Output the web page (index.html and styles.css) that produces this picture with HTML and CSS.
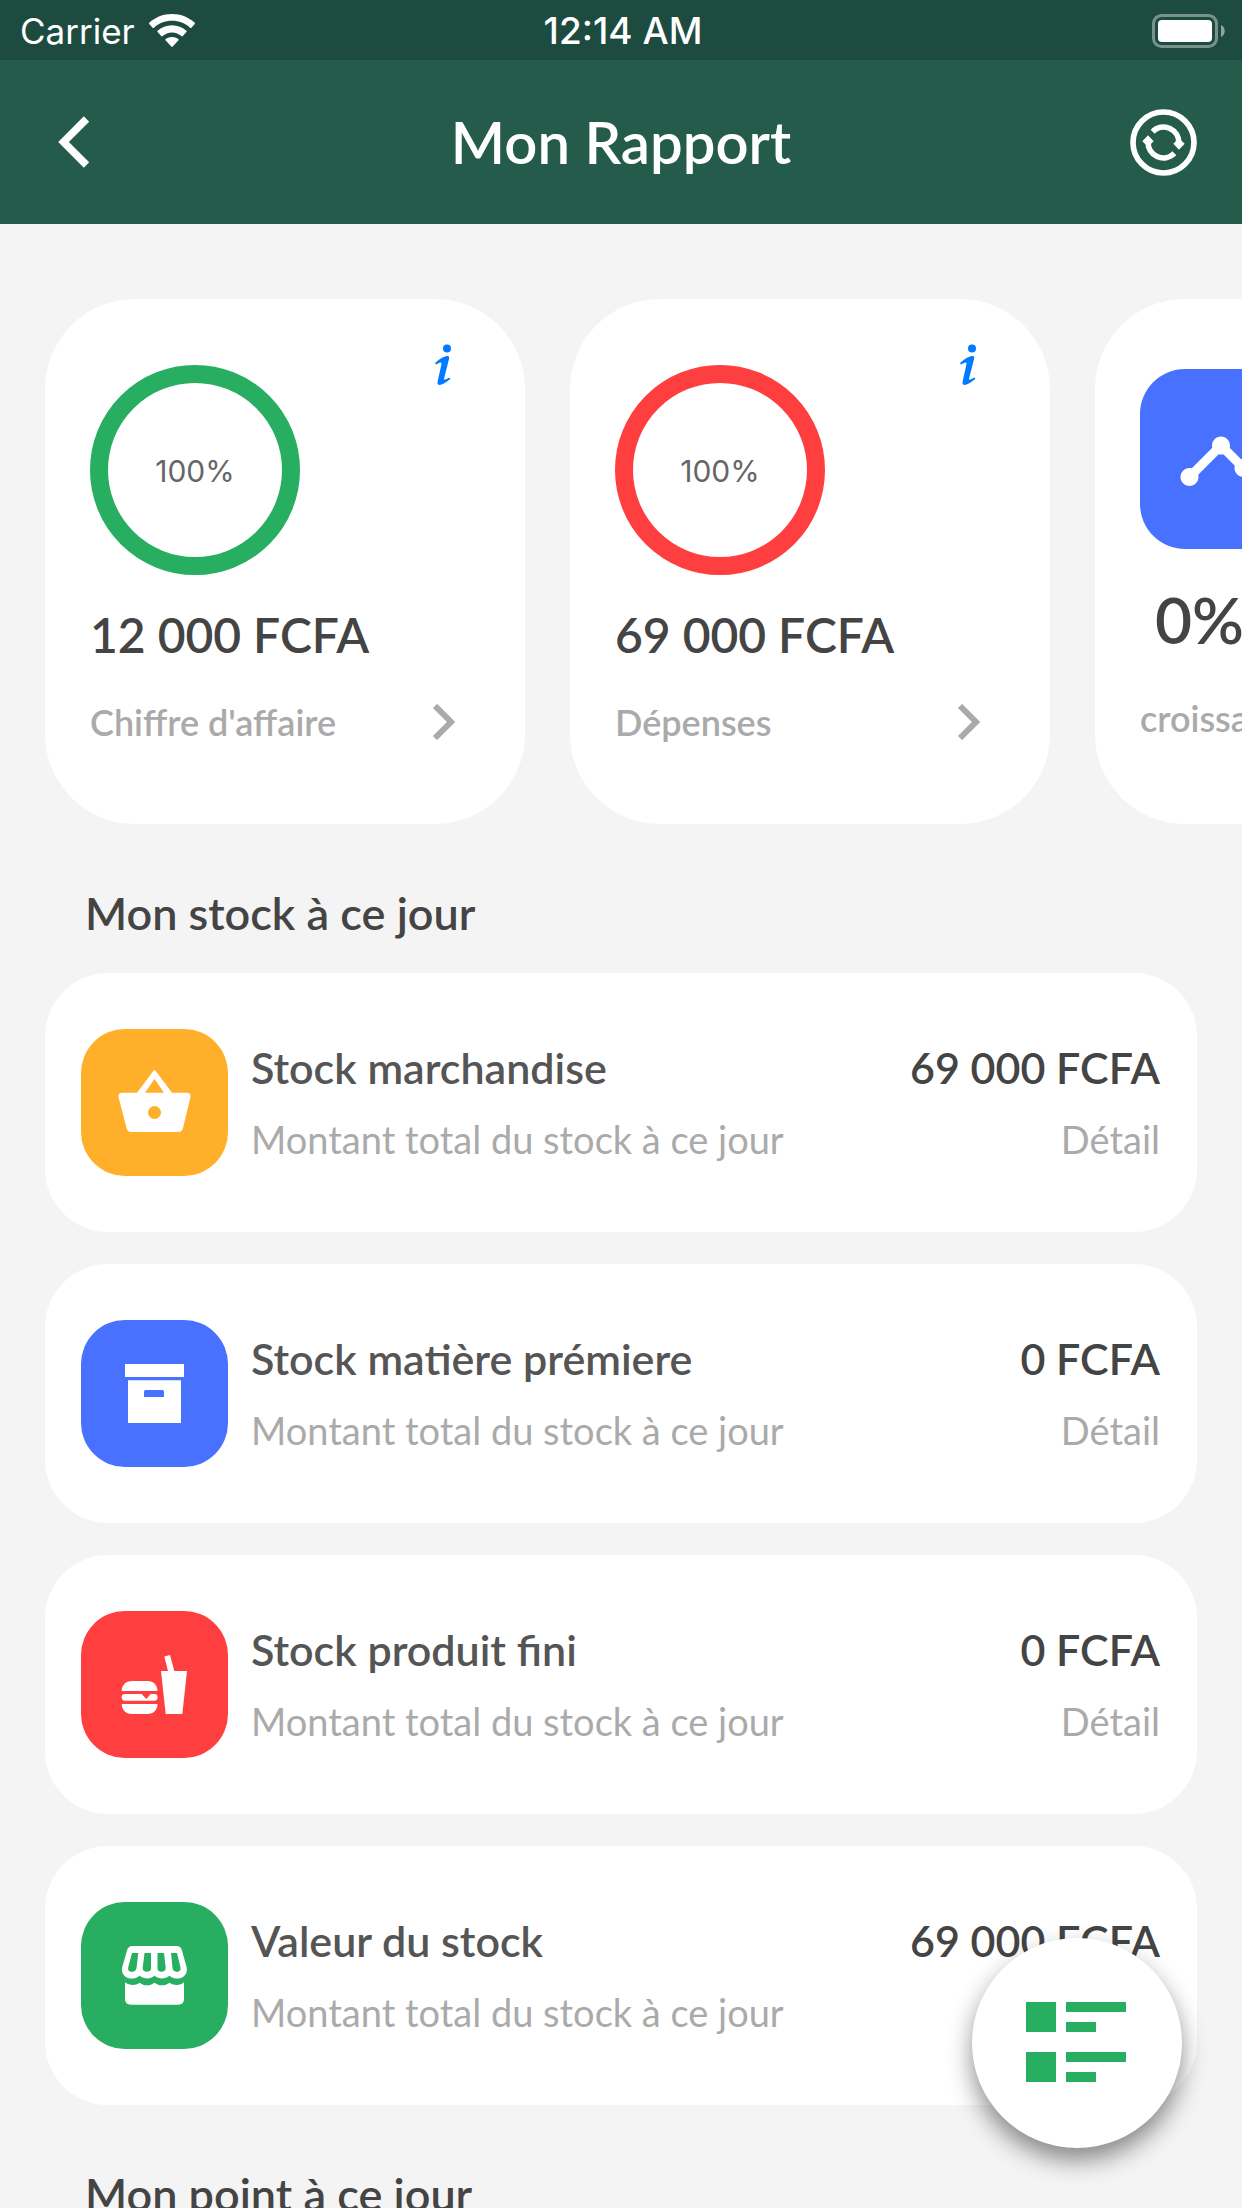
FILE: index.html
```
<!DOCTYPE html>
<html lang="fr">
<head>
<meta charset="utf-8">
<meta name="viewport" content="width=device-width, initial-scale=1">
<title>Mon Rapport</title>
<link rel="stylesheet" href="styles.css">
</head>
<body>
<div class="app">
  <div class="status">
    <div class="status-left">
      <span>Carrier</span>
      <svg class="wifi" viewBox="0 0 46 34" aria-hidden="true">
        <path fill="#fff" d="M23 0C14 0 6 3.400 .3 8.800q-.6.600 0 1.300L3.600 13.700q.7.700 1.400 0C9.700 9.400 16 6.800 23 6.800s13.300 2.600 18 6.900q.7.700 1.400 0l3.300-3.600q.6-.7 0-1.300C40 3.400 32 0 23 0z"/>
        <path fill="#fff" d="M23 11.200c-5.600 0-10.700 2.100-14.400 5.500q-.7.700 0 1.400l3.600 4q.6.600 1.300 0c2.500-2.300 5.800-3.700 9.500-3.700s7 1.400 9.500 3.700q.7.600 1.300 0l3.600-4q.7-.7 0-1.400c-3.700-3.400-8.800-5.500-14.400-5.500z"/>
        <path fill="#fff" d="M23 23c-2.400 0-4.600.8-6.300 2.100q-.8.700 0 1.400l5.600 6q.7.800 1.400 0l5.600-6q.8-.7 0-1.400C27.600 23.800 25.400 23 23 23z"/>
      </svg>
    </div>
    <span class="time">12:14 AM</span>
    <svg class="battery" viewBox="0 0 74 34" aria-hidden="true">
      <rect x="1.500" y="1.500" width="63" height="31" rx="8" fill="none" stroke="#fff" stroke-opacity=".4" stroke-width="3"/>
      <rect x="6" y="6" width="54" height="22" rx="4" fill="#fff"/>
      <path d="M69 11c5 2 5 10 0 12z" fill="#fff" fill-opacity=".5"/>
    </svg>
  </div>

  <header class="topbar">
    <button class="icon-btn" type="button" aria-label="Retour">
      <svg width="58" height="52" viewBox="0 0 58 52"><path d="M41.500 3L18.500 26l23 23" fill="none" stroke="#fff" stroke-width="7.500"/></svg>
    </button>
    <h1>Mon Rapport</h1>
    <button class="icon-btn" type="button" aria-label="Actualiser">
      <svg width="67" height="67" viewBox="0 0 201 201">
        <g fill="none" stroke="#fff" stroke-width="17">
          <circle cx="100.500" cy="100.500" r="91.500"/>
          <path d="M68 68A46 46 0 0 1 146.500 104"/>
          <path d="M133 133A46 46 0 0 1 54.500 97"/>
        </g>
        <path fill="#fff" d="M130 104l17-16 17 16-17 18zM37 97l17-18 17 18-17 16z"/>
      </svg>
    </button>
  </header>

  <main class="content">
    <section class="summary" aria-label="Résumé">
      <article class="card">
        <div class="card-top">
          <div class="ring ring-green">100%</div>
          <button class="info" type="button" aria-label="Informations"><svg width="18" height="42" viewBox="0 0 18 42"><circle cx="13" cy="4.500" r="4"/><path d="M1 19C6 14.500 10.500 12 14 12q1.600.200 1.200 2.200L10.200 34q-.5 2.500 1.300 1.500l4-2 .9 1.600C12 38.500 8.500 41 5 41q-1.700-.2-1.500-3L7.500 20q.2-2-1.500-1.500L2 20.500z"/></svg></button>
        </div>
        <p class="amount">12 000 FCFA</p>
        <a class="more" href="#chiffre"><span>Chiffre d'affaire</span><svg width="50" height="36" viewBox="0 0 50 36"><path d="M17 2l16 16-16 16" fill="none" stroke="#aaa" stroke-width="6"/></svg></a>
      </article>
      <article class="card">
        <div class="card-top">
          <div class="ring ring-red">100%</div>
          <button class="info" type="button" aria-label="Informations"><svg width="18" height="42" viewBox="0 0 18 42"><circle cx="13" cy="4.500" r="4"/><path d="M1 19C6 14.500 10.500 12 14 12q1.600.200 1.200 2.200L10.200 34q-.5 2.500 1.300 1.500l4-2 .9 1.600C12 38.500 8.500 41 5 41q-1.700-.2-1.500-3L7.500 20q.2-2-1.500-1.500L2 20.500z"/></svg></button>
        </div>
        <p class="amount">69 000 FCFA</p>
        <a class="more" href="#depenses"><span>Dépenses</span><svg width="50" height="36" viewBox="0 0 50 36"><path d="M17 2l16 16-16 16" fill="none" stroke="#aaa" stroke-width="6"/></svg></a>
      </article>
      <article class="card">
        <div class="growth-tile blue">
          <svg width="108" height="108" viewBox="0 0 24 24"><path fill="#fff" d="M23 8c0 1.100-.9 2-2 2-.18 0-.35-.02-.51-.07l-3.560 3.550c.05.16.07.34.07.52 0 1.100-.9 2-2 2s-2-.9-2-2c0-.18.02-.36.07-.52l-2.550-2.550c-.16.05-.34.07-.52.07s-.36-.02-.52-.07l-4.550 4.560c.05.16.07.33.07.51 0 1.100-.9 2-2 2s-2-.9-2-2 .9-2 2-2c.18 0 .35.02.51.07l4.560-4.550C8.020 9.360 8 9.180 8 9c0-1.100.9-2 2-2s2 .9 2 2c0 .18-.02.36-.07.52l2.550 2.550c.16-.05.34-.07.52-.07s.36.02.52.07l3.550-3.560C19.020 8.350 19 8.180 19 8c0-1.100.9-2 2-2s2 .9 2 2z"/></svg>
        </div>
        <p class="percent">0%</p>
        <p class="caption">croissance</p>
      </article>
    </section>

    <h2>Mon stock à ce jour</h2>
    <ul class="list">
      <li class="row">
        <div class="tile amber">
          <svg viewBox="0 0 147 147"><path fill="#fff" fill-rule="evenodd" d="M71.500 43q2-4 4 0L91 63.700h15.500q3.500.3 3 4.300l-7.500 31q-1 4-4.500 4H50q-3.500 0-4.500-4L37.500 68q-.6-4 3-4.300H56zM73.500 50L64 63.700h19zM73.500 77a6.500 6.500 0 1 0 0 13 6.500 6.500 0 0 0 0-13z"/></svg>
        </div>
        <div class="lines"><h3>Stock marchandise</h3><p>Montant total du stock à ce jour</p></div>
        <div class="lines end"><strong>69 000 FCFA</strong><a href="#marchandise">Détail</a></div>
      </li>
      <li class="row">
        <div class="tile blue">
          <svg viewBox="0 0 147 147"><path fill="#fff" d="M44 44h59v13H44z"/><path fill="#fff" fill-rule="evenodd" d="M47 60.300h53V103H47zM63 77h20v-5.500q0-1.500-1.500-1.500h-17q-1.500 0-1.500 1.500z"/></svg>
        </div>
        <div class="lines"><h3>Stock matière prémiere</h3><p>Montant total du stock à ce jour</p></div>
        <div class="lines end"><strong>0 FCFA</strong><a href="#matiere">Détail</a></div>
      </li>
      <li class="row">
        <div class="tile red">
          <svg viewBox="0 0 147 147"><path fill="#fff" d="M80 60h7l-3.700-14.500L89 44l4.300 16H106l-4.700 43H84.700zM40.700 80C40.700 74 45 70 51 70h15.500c6 0 10 4 10 10zM40.700 93h35.800c0 6-4 10-10 10H51c-6 0-10.300-4-10.300-10zM44 83h16.700l4.600 5 4.400-5h3.600a3.350 3.350 0 0 1 0 6.700H44A3.350 3.350 0 0 1 44 83z"/></svg>
        </div>
        <div class="lines"><h3>Stock produit fini</h3><p>Montant total du stock à ce jour</p></div>
        <div class="lines end"><strong>0 FCFA</strong><a href="#produit">Détail</a></div>
      </li>
      <li class="row">
        <div class="tile green">
          <svg viewBox="0 0 147 147"><path fill="#fff" fill-rule="evenodd" d="M51.500 44h44q4.500 0 5.500 4.500l4.700 17q1 5-2.500 8.500c-4.500 4-10.500 3-14.900-.3-4.500 3.700-10 3.700-14.800 0-4.500 3.700-10 3.700-14.800 0-4.500 3.300-10.500 4.300-15.100.3q-3.500-3.500-2.500-8.500L46 48.500Q47 44 51.500 44zM51 51h6.300l-1.800 15c-.5 5-9.500 5.500-8.300-.5zM63.500 51H70v15.500c0 4.500-8.700 4.500-8.300-.5zM76.500 51H83l1.700 15c.3 5-8.200 5-8.200.5zM90 51h6l3.500 14.500c1 6-7.500 5.500-8 .5z"/><path fill="#fff" d="M44 80.300c4.500 3.600 10.500 3.600 14.500.5 4.500 3.400 10.500 3.400 15 0 4.500 3.400 10.500 3.400 15 0 4.500 3.100 10.500 3.100 14.500-.5V97q0 5.700-5.700 5.700H49.700Q44 102.700 44 97z"/></svg>
        </div>
        <div class="lines"><h3>Valeur du stock</h3><p>Montant total du stock à ce jour</p></div>
        <div class="lines end"><strong>69 000 FCFA</strong></div>
      </li>
    </ul>

    <h2>Mon point à ce jour</h2>
  </main>

  <button class="fab" type="button" aria-label="Liste">
    <svg width="102" height="82" viewBox="0 0 102 82"><path fill="#27ae60" d="M0 0h30v30H0zM40 0h60v10H40zM40 20h30v10H40zM0 50h30v30H0zM40 50h60v10H40zM40 70h30v10H40z"/></svg>
  </button>
</div>
</body>
</html>
```
FILE: styles.css
```
* { box-sizing: border-box; }

body, h1, h2, h3, p, ul { margin: 0; padding: 0; }

body {
  font-family: "Lato Semibold", "Lato Medium", Lato, "Liberation Sans", sans-serif;
  background: #f4f4f4;
  color: #444;
}

button {
  border: 0;
  padding: 0;
  background: none;
  cursor: pointer;
}

a { color: inherit; text-decoration: none; }

svg { display: block; }

.app {
  height: 100vh;
  display: flex;
  flex-direction: column;
}

.status {
  flex: none;
  height: 60px;
  padding: 2px 16px 0 20px;
  display: grid;
  grid-template-columns: 1fr auto 1fr;
  align-items: center;
  background: #1d4b3f;
  color: #fff;
  font: 400 35px/40px Inter, "Liberation Sans", sans-serif;
}

.status-left { display: flex; align-items: center; gap: 14px; }
.wifi { width: 46px; height: 34px; }
.time { font-size: 37px; font-weight: 500; }
.battery { width: 74px; height: 34px; justify-self: end; }

.topbar {
  flex: none;
  height: 164px;
  padding: 0 45px;
  display: grid;
  grid-template-columns: 1fr auto 1fr;
  align-items: center;
  background: #245b4a;
  color: #fff;
}

.icon-btn:last-child { justify-self: end; }
.icon-btn:first-child { justify-self: start; }

h1 {
  font-size: 58px;
  line-height: 68px;
  font-weight: 600;
}

.content {
  flex: 1;
  min-height: 0;
  overflow-y: auto;
  scrollbar-width: none;
}

.summary {
  display: flex;
  gap: 45px;
  padding: 75px 45px 0;
  overflow-x: auto;
  scrollbar-width: none;
}

.card {
  flex: none;
  width: 480px;
  padding: 45px 57px 80px 45px;
  border-radius: 90px;
  background: #fff;
}

.card-top { display: flex; justify-content: space-between; align-items: flex-start; }

.ring {
  width: 210px;
  height: 210px;
  margin-top: 21px;
  padding-top: 2px;
  border: 18px solid;
  border-radius: 50%;
  display: grid;
  place-items: center;
  font: 400 30px/36px Inter, "Liberation Sans", sans-serif;
}

.ring-green { border-color: #27ae60; color: #666; }
.ring-red { border-color: #ff3f3f; color: #666; }

.info {
  width: 50px;
  display: grid;
  place-items: center;
  fill: #007aff;
}

.amount {
  margin-top: 31px;
  font-size: 48px;
  line-height: 58px;
  font-weight: 600;
}

.more {
  margin-top: 36px;
  display: flex;
  justify-content: space-between;
  align-items: center;
}

.more, .caption {
  color: #aaa;
  font-size: 36px;
  line-height: 44px;
  font-weight: 600;
}

.growth-tile {
  width: 180px;
  height: 180px;
  margin-top: 25px;
  border-radius: 45px;
  display: grid;
  place-items: center;
}

.percent {
  margin-top: 33px;
  padding-left: 15px;
  font-size: 64px;
  line-height: 76px;
  font-weight: 600;
}

.caption { margin-top: 38px; }

h2 {
  margin: 59px 45px 30px;
  padding-left: 40px;
  font-size: 45px;
  line-height: 60px;
  font-weight: 600;
}

.list {
  list-style: none;
  margin: 0 45px;
  display: grid;
  gap: 32px;
}

.row {
  display: flex;
  align-items: center;
  gap: 23px;
  padding: 56px 37px 56px 36px;
  border-radius: 63px;
  background: #fff;
}

.tile {
  flex: none;
  width: 147px;
  height: 147px;
  border-radius: 44px;
}

.amber { background: #ffaf2a; }
.blue { background: #4871ff; }
.red { background: #ff3f3f; }
.green { background: #27ae60; }

.lines {
  flex: 1;
  display: grid;
  gap: 19px;
  align-self: flex-start;
  padding-top: 13px;
  line-height: 52px;
}

.end { flex: none; text-align: right; }

.lines h3, .lines strong { font-size: 43px; font-weight: 600; }
.lines h3 { color: #555; }
.lines p, .lines a { font-family: Lato, "Liberation Sans", sans-serif; font-size: 38px; color: #aaa; }

.fab {
  position: fixed;
  right: 60px;
  bottom: 60px;
  width: 210px;
  height: 210px;
  border-radius: 50%;
  background: #fff;
  display: grid;
  place-items: center;
  box-shadow: 0 12px 24px rgba(0, 0, 0, .45);
}
```
